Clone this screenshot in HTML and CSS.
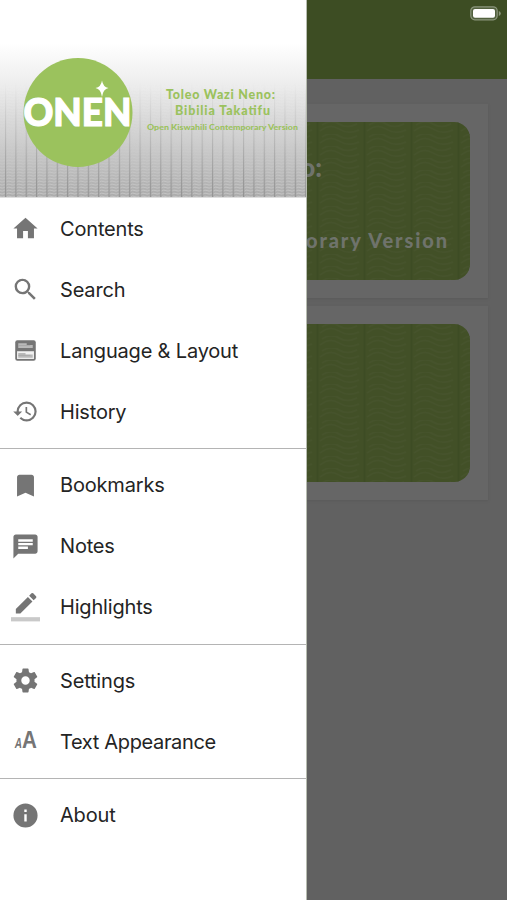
FILE: index.html
```html
<!DOCTYPE html>
<html lang="en">
<head>
<meta charset="utf-8">
<title>Toleo Wazi Neno</title>
<link rel="stylesheet" href="styles.css">
</head>
<body>
<div class="screen">
  <main class="page">
    <header class="topbar">
      <svg class="battery" viewBox="0 0 31 15" width="31" height="15"><rect x=".8" y=".8" width="26.4" height="13" rx="4" fill="#52613e" stroke="#8b967c" stroke-width="1.2"/><rect x="3" y="3" width="22" height="8.8" rx="2" fill="#fff"/><path d="M28.8 5v5q2-.7 2-2.5t-2-2.5z" fill="#8b967c"/></svg>
    </header>
    <section class="card card-first"><div class="tile">
      <svg class="tile-art" width="470" height="158" viewBox="0 0 470 158">
        <defs><pattern id="leaf" width="47" height="12" patternUnits="userSpaceOnUse" x="34"><path d="M1.500 0v12" stroke="#3d4c24" stroke-width="2"/><path d="M4 9Q14 1 23 7T43 8M6 3Q15-3 23 2T41 2" fill="none" stroke="#46532c" stroke-width="1.500"/></pattern></defs>
        <rect width="470" height="158" fill="url(#leaf)"/>
        <text x="322" y="55" text-anchor="end" class="tile-title">o:</text>
        <text x="306" y="126" textLength="141" lengthAdjust="spacing" class="tile-sub">orary Version</text>
      </svg></div></section>
    <section class="card"><div class="tile"><svg class="tile-art" width="470" height="158" viewBox="0 0 470 158"><rect width="470" height="158" fill="url(#leaf)"/></svg></div></section>
  </main>

  <aside class="drawer">
    <div class="banner">
      <svg width="306" height="197" viewBox="0 0 306 197">
        <defs>
          <linearGradient id="shade" x1="0" y1="0" x2="0" y2="1"><stop offset=".22" stop-color="#fff"/><stop offset=".45" stop-color="#ebebeb"/><stop offset=".7" stop-color="#d0d0d0"/><stop offset="1" stop-color="#acacac"/></linearGradient>
          <linearGradient id="fade" x1="0" y1="0" x2="0" y2="1"><stop offset=".42" stop-color="#000"/><stop offset=".72" stop-color="#666"/><stop offset="1" stop-color="#ddd"/></linearGradient>
          <pattern id="weave" x="5" width="10.35" height="3" patternUnits="userSpaceOnUse"><path d="M.6 0v3" stroke="#8c8c8c" stroke-width="1"/><path d="M1.500 2Q3.500.4 5.600 1.600T10 1.400" fill="none" stroke="#cecece" stroke-width=".8"/></pattern>
          <mask id="low"><rect width="306" height="197" fill="url(#fade)"/></mask>
        </defs>
        <rect width="306" height="197" fill="url(#shade)"/>
        <rect width="306" height="197" fill="url(#weave)" mask="url(#low)"/>
        <circle cx="78" cy="112.500" r="54.500" fill="#9bc25d"/>
        <text x="23.500" y="126" textLength="108" lengthAdjust="spacingAndGlyphs" class="logo">ONEN</text>
        <path d="M102 80.500q1 6.500 6.500 7.500q-5.500 1-6.500 9q-1-8-6.500-9q5.500-1 6.500-7.500z" fill="#fff"/>
        <g class="brand">
          <text x="166" y="98.500" textLength="109" lengthAdjust="spacing" font-size="12.500">Toleo Wazi Neno:</text>
          <text x="175" y="114.500" textLength="95" lengthAdjust="spacing" font-size="12.500">Bibilia Takatifu</text>
          <text x="147" y="129.500" textLength="151" lengthAdjust="spacingAndGlyphs" font-size="7">Open Kiswahili Contemporary Version</text>
        </g>
      </svg>
    </div>
    <nav class="menu">
      <a class="item"><svg class="icon" viewBox="0 0 24 24"><path d="M10 20v-6h4v6h5v-8h3L12 3 2 12h3v8z"/></svg><span class="label">Contents</span></a>
      <a class="item"><svg class="icon" viewBox="0 0 24 24"><path d="M15.500 14h-.79l-.28-.27A6.471 6.471 0 0 0 16 9.500 6.500 6.500 0 1 0 9.500 16c1.610 0 3.090-.59 4.230-1.570l.27.28v.79l5 4.990L20.490 19l-4.990-5zm-6 0C7.010 14 5 11.990 5 9.500S7.010 5 9.500 5 14 7.010 14 9.500 11.990 14 9.500 14z"/></svg><span class="label">Search</span></a>
      <a class="item"><svg class="icon" viewBox="0 0 24 24"><rect x="3.500" y="3.500" width="17" height="17" rx="1.800"/><path d="M5 12.600h14V19H5z" fill="#f1f1f1"/><path d="M6 6h7v1.500h5V10H6zM6 14h6v1.400h6V18H6z" fill="#b9b9b9"/><path d="M6 7.900h10M6 16h10" stroke="#a2a2a2" stroke-width=".6"/></svg><span class="label">Language &amp; Layout</span></a>
      <a class="item"><svg class="icon" viewBox="0 0 24 24"><path transform="translate(.9 .9) scale(.925)" d="M13 3a9 9 0 0 0-9 9H1l3.890 3.890.07.14L9 12H6c0-3.870 3.130-7 7-7s7 3.130 7 7-3.130 7-7 7c-1.930 0-3.680-.79-4.940-2.060l-1.420 1.420A8.954 8.954 0 0 0 13 21a9 9 0 0 0 0-18zm-1 5v5l4.280 2.540.72-1.210-3.500-2.080V8z" class="shift"/></svg><span class="label">History</span></a>
      <div class="divider"></div>
      <a class="item"><svg class="icon" viewBox="0 0 24 24"><path d="M17 3H7c-1.100 0-1.990.9-1.990 2L5 21l7-3 7 3V5c0-1.100-.9-2-2-2z"/></svg><span class="label">Bookmarks</span></a>
      <a class="item"><svg class="icon" viewBox="0 0 24 24"><path d="M20 2H4c-1.100 0-1.990.9-1.990 2L2 22l4-4h14c1.100 0 2-.9 2-2V4c0-1.100-.9-2-2-2zM6 9h12v2H6V9zm8 5H6v-2h8v2zm4-6H6V6h12v2z"/></svg><span class="label">Notes</span></a>
      <a class="item"><svg class="icon" viewBox="0 0 24 24"><path d="M17.750 7 14 3.250l-10 10V17h3.750l10-10zm2.960-2.960a1 1 0 0 0 0-1.410L18.370.29a1 1 0 0 0-1.410 0L15 2.250 18.750 6l1.960-1.960z"/><path d="M0 20h24v3.500H0z" fill="#c9c9c9"/></svg><span class="label">Highlights</span></a>
      <div class="divider"></div>
      <a class="item"><svg class="icon" viewBox="0 0 24 24"><path d="M19.430 12.980c.04-.32.07-.64.07-.98s-.03-.66-.07-.98l2.110-1.650c.19-.15.24-.42.12-.64l-2-3.460c-.12-.22-.39-.3-.61-.22l-2.490 1c-.52-.4-1.080-.73-1.690-.98l-.38-2.650A.488.488 0 0 0 14 2h-4c-.25 0-.46.18-.49.42l-.38 2.650c-.61.25-1.170.59-1.690.98l-2.490-1c-.23-.09-.49 0-.61.22l-2 3.460c-.13.22-.07.49.12.64l2.110 1.650c-.04.32-.07.65-.07.98s.03.66.07.98l-2.110 1.650c-.19.15-.24.42-.12.64l2 3.460c.12.22.39.3.61.22l2.490-1c.52.4 1.080.73 1.690.98l.38 2.650c.03.24.24.42.49.42h4c.25 0 .46-.18.49-.42l.38-2.650c.61-.25 1.170-.59 1.690-.98l2.490 1c.23.09.49 0 .61-.22l2-3.460c.12-.22.07-.49-.12-.64l-2.110-1.650zM12 15.500c-1.930 0-3.500-1.570-3.500-3.500s1.570-3.500 3.500-3.500 3.500 1.570 3.500 3.500-1.570 3.500-3.500 3.500z"/></svg><span class="label">Settings</span></a>
      <a class="item"><svg class="icon" viewBox="0 0 24 24"><text x="3" y="17.600" textLength="6" lengthAdjust="spacingAndGlyphs" font-size="12" class="aa aa-small">A</text><text x="9.200" y="17.600" textLength="12.300" lengthAdjust="spacingAndGlyphs" font-size="19.500" class="aa">A</text></svg><span class="label label-tight">Text Appearance</span></a>
      <div class="divider"></div>
      <a class="item"><svg class="icon" viewBox="0 0 24 24"><path d="M12 2a10 10 0 1 0 0 20 10 10 0 0 0 0-20zm1 15h-2v-6h2v6zm0-8h-2V7h2v2z"/></svg><span class="label">About</span></a>
    </nav>
  </aside>
</div>
</body>
</html>
```
FILE: styles.css
```css
* { box-sizing: border-box; }
body { margin: 0; background: #616161; }
.screen { display: grid; width: 507px; height: 900px; overflow: hidden; font-family: Inter, "Liberation Sans", sans-serif; }
.page, .drawer { grid-area: 1 / 1; }
.page { background: #616161; }
.topbar { height: 79px; background: #3d4d23; display: flex; justify-content: flex-end; padding: 6px 6px 0 0; margin-bottom: 25px; }
.card { width: 488px; height: 194px; background: #666; padding: 18px 18px 0 0; margin-bottom: 8px; box-shadow: 0 1px 2px #5a5a5a; }
.tile { height: 158px; border-radius: 0 16px 16px 0; background: #425027; overflow: hidden; }
.tile-art { display: block; }
.tile-title, .tile-sub { font-family: Lato, sans-serif; font-weight: 900; fill: #6f736c; }
.tile-title { font-size: 26px; }
.tile-sub { font-size: 20px; }
.drawer { width: 307px; height: 900px; background: #fff; border-right: 1px solid #b7bcb0; z-index: 1; }
.banner { height: 198px; border-bottom: 1px solid #dedede; }
.banner svg { display: block; }
.logo { font-family: Lato, sans-serif; font-weight: 900; font-size: 38px; fill: #fff; stroke: #fff; stroke-width: 1.2px; }
.brand { font-family: Lato, sans-serif; font-weight: 900; fill: #9bc25d; }
.item { height: 61px; display: flex; align-items: center; padding-left: 11px; gap: 20px; }
.icon { width: 29px; height: 29px; fill: #757575; flex: none; overflow: visible; }
.label { font-size: 20px; line-height: 24px; letter-spacing: -.18px; color: #242424; white-space: nowrap; }
.label-tight { letter-spacing: -.35px; }
.divider { height: 1px; background: #b4b4b4; margin: 6px 0 5.5px; }
.aa { font-family: "Liberation Sans", sans-serif; font-weight: 700; }
.aa-small { font-style: italic; }
```
